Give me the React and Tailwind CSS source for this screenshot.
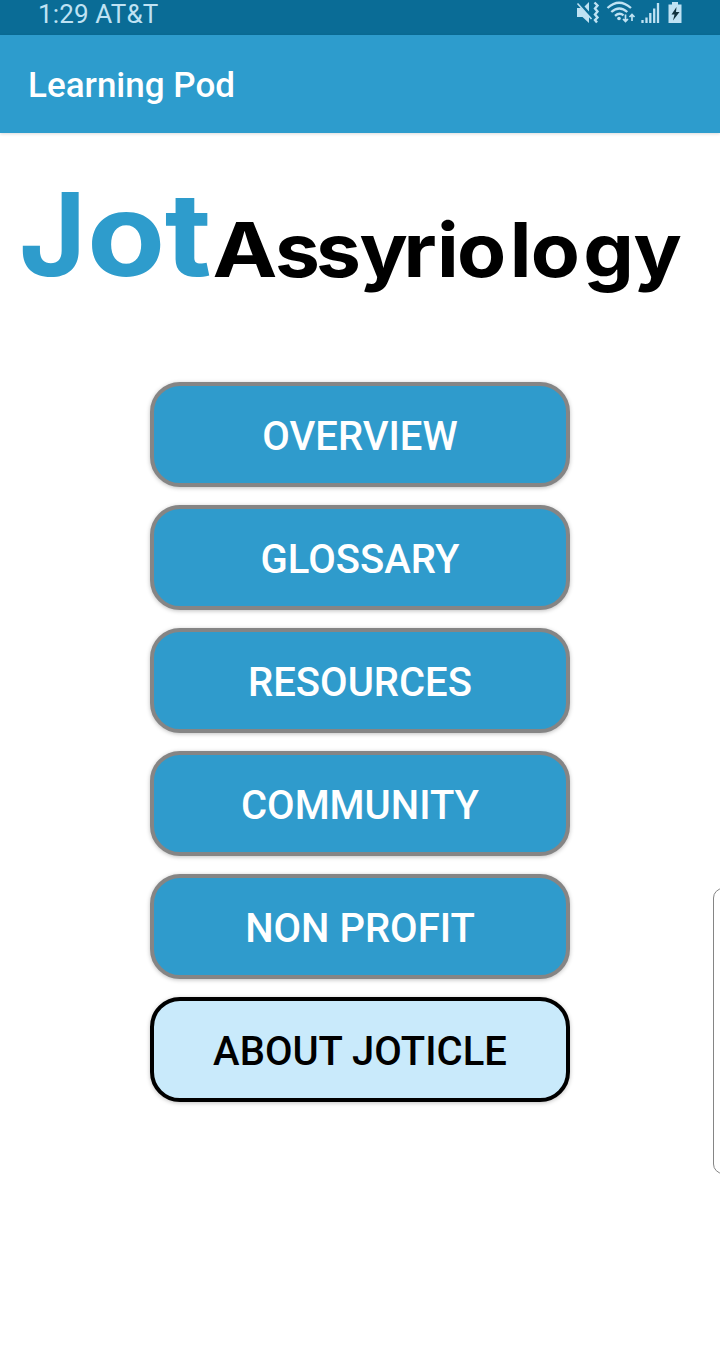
import React from 'react';

const menuItems = [
    { label: 'Overview' },
    { label: 'Glossary' },
    { label: 'Resources' },
    { label: 'Community' },
    { label: 'Non Profit' },
    { label: 'About Joticle', light: true },
];

const StatusIcons = () => (
    <svg className="w-[108px] h-[26px]" viewBox="576 0 108 26" fill="none" stroke="#bfe2f3" aria-hidden="true">
        {/* muted speaker with vibration */}
        <path d="M577 8h4l8 8v7l-6.500-6H577z" fill="#bfe2f3" stroke="none" />
        <path d="M584.500 6.500l4.500-4.500v9.500z" fill="#bfe2f3" stroke="none" />
        <path d="M577.500 3.500l14 15.500" strokeWidth="1.600" />
        <path d="M594.500 2.500l3 3-2.500 3 2.500 3-2.500 3 2.500 3-2.500 2.500 2 2.500" strokeWidth="2.400" />
        {/* wifi */}
        <path d="M607.500 8q11.500-10.500 23.500 0M611.300 12q8-7 16 0M615 15.800q4.500-3.800 8.500-.5" strokeWidth="2.300" />
        <circle cx="619" cy="18.500" r="1.800" fill="#bfe2f3" stroke="none" />
        <path d="M625.500 14.500v7M623 19l2.500 2.500 2.500-2.500M632 21V14.500M629.500 17l2.500-2.500 2.500 2.500" strokeWidth="1.700" />
        {/* signal */}
        <path d="M642.500 20v3M646.500 17.500V23M650.300 13v10M654.200 8.500V23M658 3v20" strokeWidth="2.300" />
        {/* battery */}
        <path d="M672 2h6v2.500h3.500V23h-13V4.500h3.500z" fill="#bfe2f3" stroke="none" />
        <path d="M676.500 7l-5 7.500h3l-1.500 6 6.500-8.500h-3.500z" fill="#12333f" stroke="none" />
    </svg>
);

const Logo = () => (
    <svg className="h-[150px] w-full" viewBox="0 160 720 150" fontFamily="Inter, sans-serif" fontWeight="700">
        <g fontSize="115" fill="#2e9ccc">
            <text x="19" y="276">J</text>
            <text transform="translate(87 276) scale(1.11 1)" x="0 70">ot</text>
        </g>
        <g fontSize="75">
            <text transform="translate(212.500 276.500) scale(1.16 1)">A</text>
            <text transform="translate(275 276.500) scale(1.07 1)" x="0 38.300 79 120 151.400 170 219.500 239 288 335">ssyriology</text>
        </g>
    </svg>
);

const MenuButton = ({ label, light }) => (
    <button
        className={`flex h-[105px] w-[420px] items-center justify-center rounded-[30px] border-4 pt-1 text-[40px] font-medium uppercase shadow-[0_1px_4px_rgba(0,0,0,0.25)] ${light
            ? 'border-black bg-[#c9eafb] text-black'
            : 'border-[#858585] bg-[#2f9bcc] text-white'
        }`}
    >
        {label}
    </button>
);

const App = () => {
    return (
        <div className="relative h-[1345px] w-[720px] overflow-hidden bg-white font-['Roboto',sans-serif]">
            <div className="flex h-[35px] items-start justify-between bg-[#0a6c96] pl-[38px] pr-9">
                <span className="text-[26px] leading-[28px] tracking-[0.15px] text-[#bfe2f3]">1:29 AT&amp;T</span>
                <StatusIcons />
            </div>
            <header className="flex h-[98px] items-center bg-[#2d9ccd] px-7 pt-1 shadow-[0_1px_3px_rgba(0,0,0,0.15)]">
                <h1 className="text-[35px] font-medium text-white">Learning Pod</h1>
            </header>
            <main className="pt-[27px]">
                <Logo />
                <nav className="mt-[72px] flex flex-col items-center gap-[18px]">
                    {menuItems.map((item) => (
                        <MenuButton key={item.label} label={item.label} light={item.light} />
                    ))}
                </nav>
            </main>
            {/* edge panel handle */}
            <div className="absolute top-[888px] -right-5 h-[286px] w-[27px] rounded-[10px] border border-[#858585] bg-white" />
        </div>
    );
};

export default App;
